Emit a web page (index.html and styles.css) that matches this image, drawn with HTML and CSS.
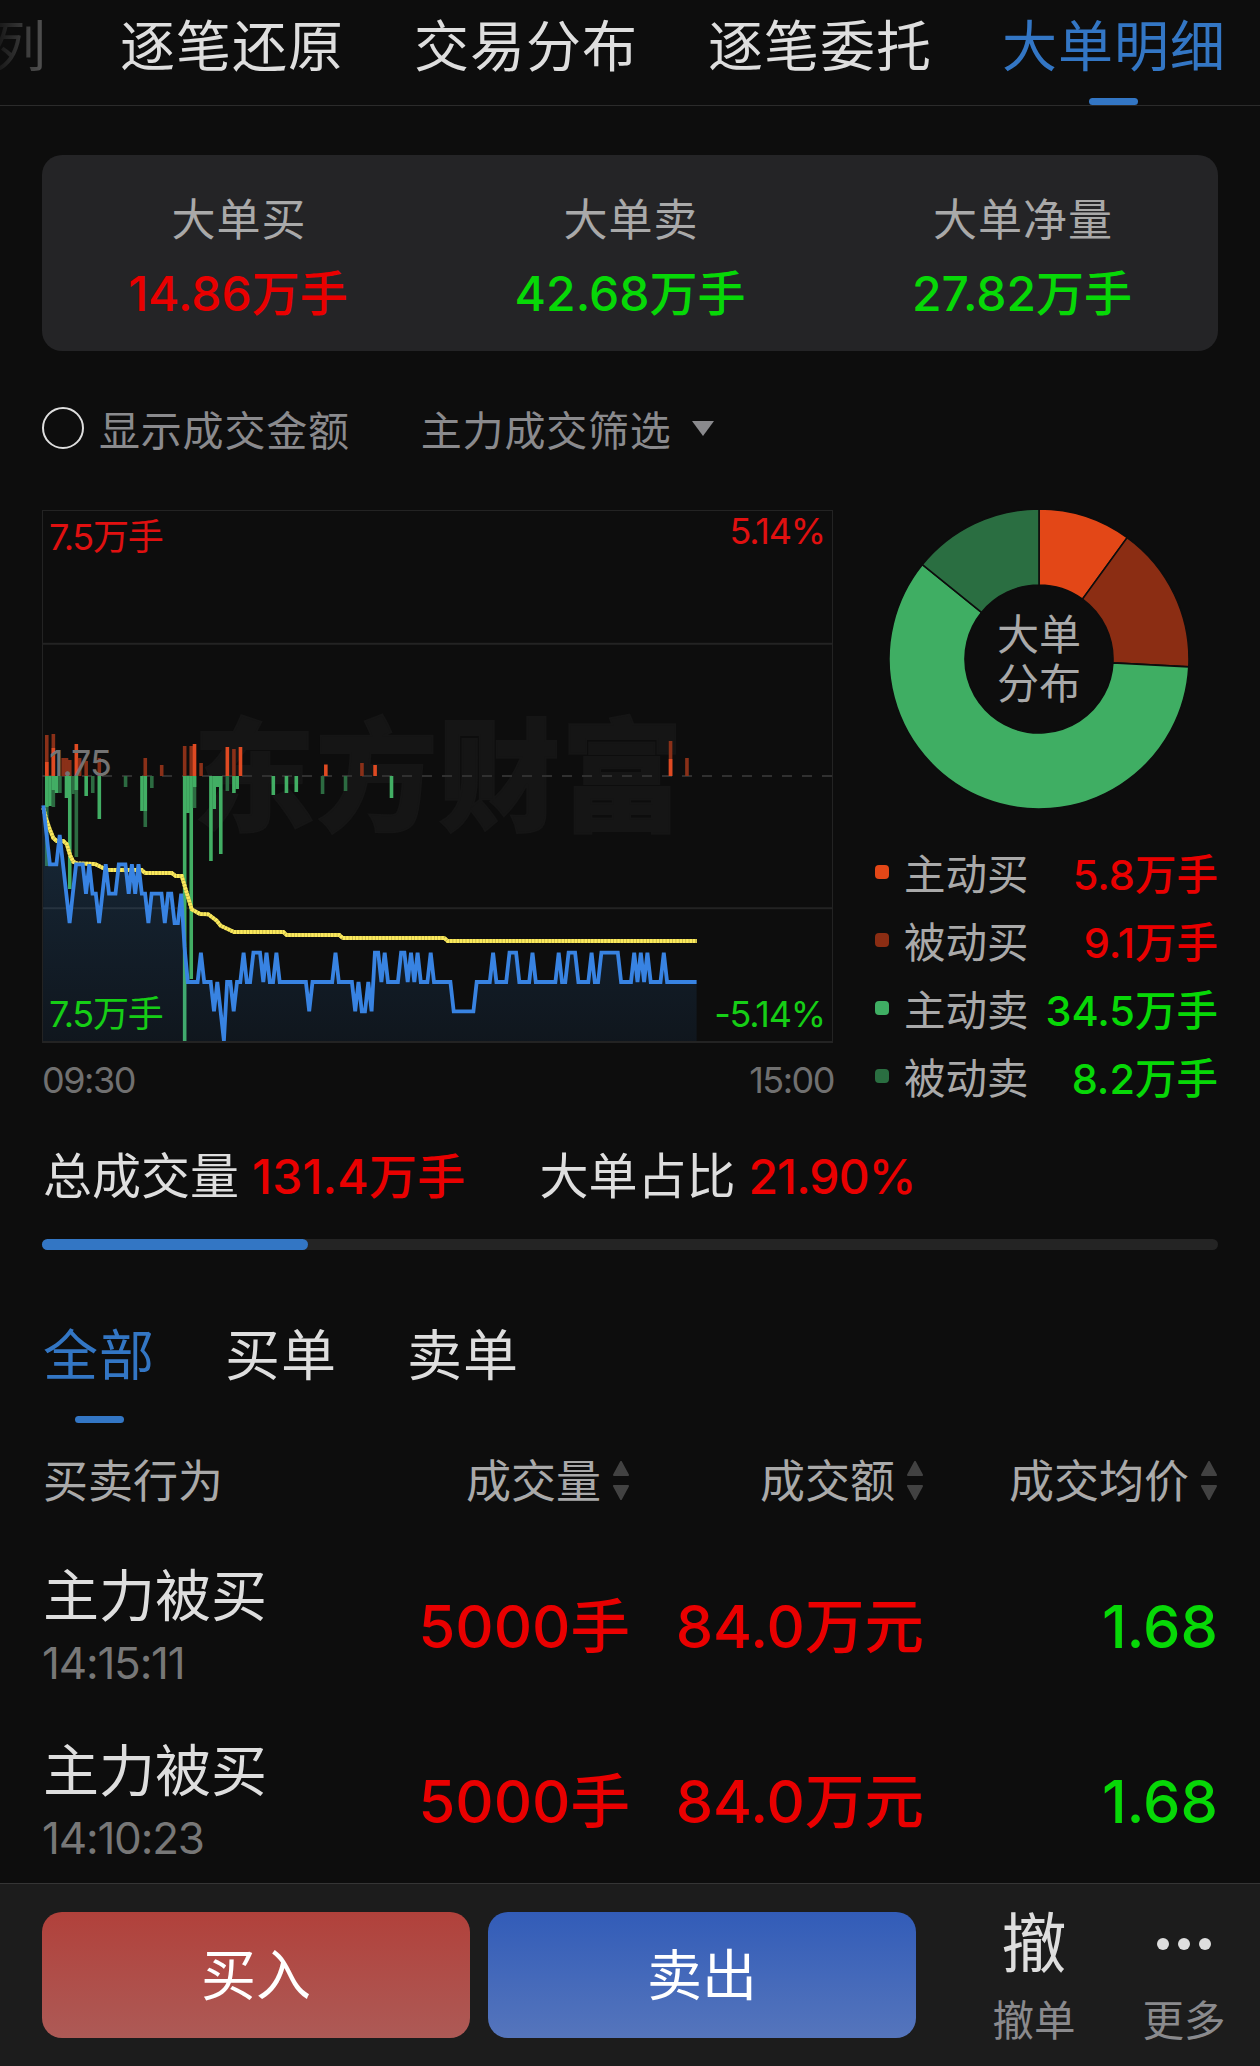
FILE: index.html
```html
<!DOCTYPE html>
<html lang="zh-CN">
<head>
    <meta charset="UTF-8">
    <meta name="viewport" content="width=device-width, initial-scale=1.0">
    <title>大单明细</title>
    <link rel="stylesheet" href="styles.css">
</head>
<body>
    <header class="top-tabs">
        <a class="tab faded">列</a>
        <a class="tab">逐笔还原</a>
        <a class="tab">交易分布</a>
        <a class="tab">逐笔委托</a>
        <a class="tab active">大单明细</a>
    </header>

    <main>
        <section class="summary">
            <div class="summary-item">
                <div class="summary-label">大单买</div>
                <div class="summary-value red">14.86万手</div>
            </div>
            <div class="summary-item">
                <div class="summary-label">大单卖</div>
                <div class="summary-value green">42.68万手</div>
            </div>
            <div class="summary-item">
                <div class="summary-label">大单净量</div>
                <div class="summary-value green">27.82万手</div>
            </div>
        </section>

        <section class="filters">
            <span class="radio"></span>
            <span class="filter-name">显示成交金额</span>
            <span class="filter-name filter-select">主力成交筛选</span>
            <span class="caret"></span>
        </section>

        <section class="charts">
            <div class="trend">
                <svg class="trend-chart" width="792" height="534" viewBox="42 510 792 534">
                    <defs>
                        <linearGradient id="area-fill" gradientUnits="userSpaceOnUse" x1="0" y1="806" x2="0" y2="1042">
                            <stop offset="0" stop-color="#3f8fd6" stop-opacity="0.22"/>
                            <stop offset="1" stop-color="#2f7fd6" stop-opacity="0.08"/>
                        </linearGradient>
                    </defs>
                    <text class="watermark" x="193" y="821" textLength="490">东方财富</text>
                    <rect class="grid" x="42.5" y="510.5" width="790" height="531.5"/>
                    <path class="grid" stroke-width="2" d="M42 643.7H833M42 908.3H833M42 1042H833"/>
                    <path class="grid dashed" d="M42 776H833"/>
                    <g id="bars"></g>
                    <path id="price-area" fill="url(#area-fill)"/>
                    <polyline id="avg-base" class="avg-base"/>
                    <polyline id="avg-line" class="avg-line"/>
                    <polyline id="price-line" class="price-line"/>
                    <text class="axis red-text" x="49" y="550">7.5万手</text>
                    <text class="axis red-text end" x="825" y="543.5">5.14%</text>
                    <text class="axis gray-text" x="49" y="775.5">1.75</text>
                    <text class="axis green-text" x="49" y="1026.5">7.5万手</text>
                    <text class="axis green-text end" x="825" y="1026.5">-5.14%</text>
                </svg>
                <div class="time-axis">
                    <span>09:30</span>
                    <span>15:00</span>
                </div>
            </div>

            <div class="distribution">
                <svg class="donut" width="300" height="300" viewBox="-150 -150 300 300">
                    <g id="donut-slices"></g>
                    <text class="donut-text" x="0" y="-9">大单</text>
                    <text class="donut-text" x="0" y="40">分布</text>
                </svg>
                <ul class="legend">
                    <li><i class="dot active-buy"></i><span>主动买</span><b class="red">5.8万手</b></li>
                    <li><i class="dot passive-buy"></i><span>被动买</span><b class="red">9.1万手</b></li>
                    <li><i class="dot active-sell"></i><span>主动卖</span><b class="green">34.5万手</b></li>
                    <li><i class="dot passive-sell"></i><span>被动卖</span><b class="green">8.2万手</b></li>
                </ul>
            </div>
        </section>

        <section class="totals">
            <span class="total-label">总成交量</span>
            <span class="total-value red">131.4万手</span>
            <span class="total-label">大单占比</span>
            <span class="total-value percent red">21.90%</span>
        </section>
        <div class="progress"><div class="progress-bar" style="width: 22.6%"></div></div>

        <nav class="sub-tabs">
            <a class="tab active">全部</a>
            <a class="tab">买单</a>
            <a class="tab">卖单</a>
        </nav>

        <section class="orders">
            <div class="orders-head">
                <span>买卖行为</span>
                <span>成交量<svg class="sort" width="16" height="40" viewBox="0 0 16 40"><path d="M8 1L15 14H1ZM8 38L1 25H15Z"/></svg></span>
                <span>成交额<svg class="sort" width="16" height="40" viewBox="0 0 16 40"><path d="M8 1L15 14H1ZM8 38L1 25H15Z"/></svg></span>
                <span>成交均价<svg class="sort" width="16" height="40" viewBox="0 0 16 40"><path d="M8 1L15 14H1ZM8 38L1 25H15Z"/></svg></span>
            </div>
            <div class="order">
                <div class="order-type">
                    <div class="order-name">主力被买</div>
                    <div class="order-time">14:15:11</div>
                </div>
                <div class="order-value red">5000手</div>
                <div class="order-value red">84.0万元</div>
                <div class="order-value green">1.68</div>
            </div>
            <div class="order">
                <div class="order-type">
                    <div class="order-name">主力被买</div>
                    <div class="order-time">14:10:23</div>
                </div>
                <div class="order-value red">5000手</div>
                <div class="order-value red">84.0万元</div>
                <div class="order-value green">1.68</div>
            </div>
        </section>
    </main>

    <footer class="bottom-bar">
        <button class="btn buy">买入</button>
        <button class="btn sell">卖出</button>
        <div class="action cancel">
            <span class="action-icon">撤</span>
            <span class="action-label">撤单</span>
        </div>
        <div class="action more">
            <span class="action-icon"><svg width="54" height="12" viewBox="0 0 54 12"><circle cx="6" cy="6" r="6"/><circle cx="27" cy="6" r="6"/><circle cx="48" cy="6" r="6"/></svg></span>
            <span class="action-label">更多</span>
        </div>
    </footer>

    <script src="chart.js"></script>
</body>
</html>
```

FILE: styles.css
```css
/* Basic styling */
* {
    margin: 0;
    padding: 0;
    box-sizing: border-box;
}

body {
    width: 1260px;
    height: 2066px;
    display: flex;
    flex-direction: column;
    overflow: hidden;
    background-color: #0d0d0d;
    color: #dedede;
    font-family: Inter, "Noto Sans CJK SC", sans-serif;
}

main {
    flex: 1;
    min-height: 0;
    padding: 0 42px;
}

.red {
    color: #e90000;
}

.green {
    color: #07d807;
}

/* Tabs */
.top-tabs {
    flex: none;
    height: 106px;
    display: flex;
    justify-content: flex-end;
    gap: 70px;
    padding-right: 34px;
    border-bottom: 1px solid #2b2b2b;
}

.tab {
    flex: none;
    display: flex;
    flex-direction: column;
    align-items: center;
    font-size: 55px;
    letter-spacing: 1px;
    line-height: 93px;
}

.tab.active {
    color: #3376c4;
}

.tab.active::after {
    content: "";
    width: 49px;
    height: 7px;
    margin-top: 5px;
    border-radius: 4px;
    background-color: #3376c4;
}

.tab.faded {
    margin-right: 3px;
    color: transparent;
    background: linear-gradient(to right, #161616 10%, #555);
    background-clip: text;
    -webkit-background-clip: text;
}

/* Summary card */
.summary {
    height: 196px;
    margin-top: 49px;
    padding-top: 35px;
    display: grid;
    grid-template-columns: repeat(3, 1fr);
    text-align: center;
    border-radius: 20px;
    background-color: #242426;
}

.summary-label {
    padding-left: 2px;
    font-size: 44px;
    letter-spacing: 1px;
    line-height: 60px;
    color: #a9a9a9;
}

.summary-value {
    margin-top: 14px;
    font-size: 48px;
    font-weight: 500;
    line-height: 60px;
}

/* Filters */
.filters {
    height: 42px;
    margin-top: 56px;
    display: flex;
    align-items: center;
}

.radio {
    width: 42px;
    height: 42px;
    border: 2px solid #dedede;
    border-radius: 50%;
}

.filter-name {
    margin: 5px 0 0 15px;
    font-size: 41px;
    letter-spacing: 0.8px;
    line-height: 42px;
    color: #8a8a8d;
}

.filter-select {
    margin-left: 71px;
}

.caret {
    margin-left: 20px;
    border: 11px solid transparent;
    border-top: 15px solid #8a8a8d;
    border-bottom: 0;
}

/* Charts */
.charts {
    height: 594px;
    margin-top: 61px;
    display: flex;
    justify-content: space-between;
}

.trend {
    width: 792px;
}

.trend-chart {
    display: block;
    overflow: visible;
}

.time-axis {
    display: flex;
    justify-content: space-between;
    padding-top: 15px;
    font-size: 36px;
    letter-spacing: -1.5px;
    line-height: 42px;
    color: #707070;
}

.watermark {
    font-size: 122px;
    font-weight: 900;
    fill: #151515;
    stroke: #151515;
    stroke-width: 2;
}

.grid {
    fill: none;
    stroke: #232323;
}

.grid.dashed {
    stroke: #303030;
    stroke-width: 2;
    stroke-dasharray: 10 10;
}

.axis {
    font-size: 36px;
    letter-spacing: -1.2px;
}

.axis.end {
    text-anchor: end;
}

.red-text {
    fill: #e01010;
}

.green-text {
    fill: #16ce16;
}

.gray-text {
    fill: #747474;
}

.bright-up {
    fill: #df4a22;
}

.dark-up {
    fill: #8a3018;
}

.bright-down {
    fill: #42ae64;
}

.dark-down {
    fill: #2c6b41;
}

.price-line,
.avg-line,
.avg-base {
    fill: none;
    stroke-width: 3.8;
}

.price-line {
    stroke: #3883e2;
}

.avg-base {
    stroke: #b9ad45;
}

.avg-line {
    stroke: #fbe95c;
    stroke-dasharray: 2.6 0.68;
}

/* Donut and legend */
.distribution {
    width: 343px;
}

.donut {
    display: block;
    margin: -1px 0 0 14px;
}

.donut-text {
    font-size: 42px;
    text-anchor: middle;
    fill: #a9a9a9;
}

.legend {
    margin-top: 29px;
    list-style: none;
}

.legend li {
    height: 68px;
    display: flex;
    align-items: center;
    font-size: 41.5px;
    color: #a9a9a9;
}

.legend b {
    margin-left: auto;
    font-weight: 500;
}

.dot {
    width: 14px;
    height: 14px;
    margin-right: 15px;
    border-radius: 4px;
}

.active-buy {
    background-color: #e34717;
    fill: #e34717;
}

.passive-buy {
    background-color: #8b2d13;
    fill: #8b2d13;
}

.active-sell {
    background-color: #3fae63;
    fill: #3fae63;
}

.passive-sell {
    background-color: #2a6e41;
    fill: #2a6e41;
}

/* Totals */
.totals {
    display: flex;
    margin-top: 43px;
    padding-left: 1px;
    font-size: 49px;
    line-height: 60px;
}

.total-value {
    margin: 0 74px 0 13px;
    font-size: 48px;
    font-weight: 500;
    letter-spacing: 0.2px;
}

.total-value.percent {
    letter-spacing: -0.9px;
}

.progress {
    height: 11px;
    margin-top: 32px;
    border-radius: 6px;
    background-color: #242424;
}

.progress-bar {
    height: 11px;
    border-radius: 6px;
    background-color: #3376c4;
}

.sub-tabs {
    display: flex;
    gap: 70px;
    margin-top: 59px;
    padding-left: 1px;
}

.sub-tabs .tab.active::after {
    margin-top: 14px;
}

/* Orders */
.orders-head {
    display: grid;
    grid-template-columns: repeat(4, 1fr);
    margin-top: 29px;
    font-size: 45px;
    line-height: 60px;
    color: #a9a9a9;
}

.orders-head span {
    display: flex;
    align-items: center;
    justify-content: flex-end;
    white-space: nowrap;
}

.orders-head span:first-child {
    justify-content: flex-start;
    padding-left: 1px;
}

.sort {
    margin: -2px 1px 0 12px;
    fill: #424242;
    stroke: #424242;
    stroke-width: 2;
    stroke-linejoin: round;
}

.order {
    height: 175px;
    display: grid;
    grid-template-columns: repeat(4, 1fr);
    align-items: center;
}

.orders-head + .order {
    margin-top: 28px;
}

.order-name {
    padding: 1px 0 0 1px;
    font-size: 56px;
    line-height: 70px;
}

.order-time {
    font-size: 44px;
    letter-spacing: -1.2px;
    line-height: 64px;
    color: #777;
}

.order-value {
    margin-top: -3px;
    font-size: 59.5px;
    font-weight: 500;
    line-height: 72px;
    text-align: right;
    white-space: nowrap;
}

/* Bottom bar */
.bottom-bar {
    flex: none;
    height: 183px;
    display: flex;
    padding: 28px 0 0 42px;
    border-top: 1px solid #353535;
    background-color: #1c1c1c;
}

.btn {
    width: 428px;
    height: 126px;
    margin-right: 18px;
    border: 0;
    border-radius: 20px;
    color: #fff;
    font-family: inherit;
    font-size: 55px;
    line-height: 126px;
}

.buy {
    background: linear-gradient(#b1413b, #ad5a56);
}

.sell {
    background: linear-gradient(#325cb8, #5575bc);
}

.action {
    width: 84px;
    display: flex;
    flex-direction: column;
    align-items: center;
}

.cancel {
    margin-left: 58px;
}

.more {
    margin-left: 66px;
}

.action-icon {
    height: 64px;
    display: flex;
    align-items: center;
    font-size: 65px;
    line-height: 64px;
    fill: #dedede;
}

.action-label {
    margin-top: 15px;
    font-size: 41.5px;
    line-height: 60px;
    color: #8a8a8d;
}
```

FILE: chart.js
```js
const SVG_NS = 'http://www.w3.org/2000/svg';
const BASE_Y = 776;

function minuteX(m) {
    return 43.3 + m * 3.283;
}

function add(parent, tag, attrs) {
    const el = document.createElementNS(SVG_NS, tag);
    for (const key in attrs) el.setAttribute(key, attrs[key]);
    parent.appendChild(el);
}

// [minute, dark height, bright height]
const upBars = [
    [1, 41, 14], [3, 42, 28], [6, 18, 0], [7, 18, 0], [8, 16, 0], [10, 0, 32], [11, 18, 0],
    [13, 15, 0], [17, 18, 0], [31, 18, 0], [36, 11, 0], [43, 30, 0], [45, 30, 0], [46, 0, 32],
    [48, 13, 0], [56, 0, 29], [58, 27, 0], [60, 0, 29], [86, 0, 11.5], [97, 13, 0],
    [101, 0, 11], [191, 35, 17], [196, 18, 0]
];
const downBars = [
    [1, 90, 31], [2, 0, 30], [3, 31, 14], [4, 0, 17], [5, 17, 0], [7, 0, 22], [8, 0, 113],
    [9, 18, 0], [10, 81, 14], [13, 0, 20], [15, 17, 0], [17, 0, 43], [25, 11, 0], [30, 0, 35],
    [31, 51, 35], [33, 12, 0], [43, 0, 265], [44, 0, 37], [45, 0, 203], [46, 32, 11],
    [51, 0, 85], [52, 0, 33], [53, 0, 11], [54, 0, 78], [56, 15, 0], [58, 0, 17], [59, 0, 13],
    [70, 0, 19], [74, 0, 17], [77, 0, 16], [85, 18, 0], [92, 15, 0], [106, 0, 22]
];

const bars = document.getElementById('bars');

function drawBars(list, up) {
    const dir = up ? 'up' : 'down';
    list.forEach(([m, dark, bright]) => {
        [['dark-', dark], ['bright-', bright]].forEach(([tone, h]) => {
            if (!h) return;
            add(bars, 'rect', {
                class: tone + dir,
                x: minuteX(m) - 1.6,
                y: up ? BASE_Y - h : BASE_Y,
                width: 3.6,
                height: h
            });
        });
    });
}

drawBars(upBars, true);
drawBars(downBars, false);

// Price in ticks below the previous close: [first minute, ticks]
const prices = [
    [0, 1], [1, 2], [2, 3], [5, 2], [6, 3], [7, 4], [8, 5], [9, 4], [10, 3], [13, 4], [14, 3],
    [15, 4], [17, 5], [18, 4], [19, 3], [20, 4], [23, 3], [26, 4], [27, 3], [28, 4], [29, 3],
    [30, 4], [32, 5], [33, 4], [37, 5], [38, 4], [40, 5], [42, 4], [43, 5.8], [44, 7], [48, 6],
    [49, 7], [52, 8], [53, 7], [54, 8], [55, 9], [56, 7], [58, 8], [59, 7], [61, 6], [62, 7],
    [64, 6], [67, 7], [68, 6], [69, 7], [71, 6], [72, 7], [81, 8], [82, 7], [89, 6], [90, 7],
    [95, 8], [96, 7], [97, 8], [99, 7], [100, 8], [101, 6], [103, 7], [104, 6], [105, 7],
    [109, 6], [111, 7], [112, 6], [113, 7], [114, 6], [115, 7], [118, 6], [119, 7], [125, 8],
    [132, 7], [137, 6], [138, 7], [142, 6], [145, 7], [149, 6], [150, 7], [157, 6], [158, 7],
    [160, 6], [163, 7], [167, 6], [168, 7], [170, 6], [176, 7], [180, 6], [181, 7], [182, 6],
    [183, 7], [184, 6], [185, 7], [189, 6], [190, 7]
];
const LAST_MINUTE = 199;

const points = [];
prices.forEach(([start, ticks], i) => {
    const end = i + 1 < prices.length ? prices[i + 1][0] - 1 : LAST_MINUTE;
    for (let m = start; m <= end; m++) {
        points.push(minuteX(m).toFixed(1) + ',' + (BASE_Y + ticks * 29.43).toFixed(1));
    }
});
document.getElementById('price-line').setAttribute('points', points.join(' '));
document.getElementById('price-area').setAttribute('d',
    'M43,1041L' + points.join('L') + 'V1041Z');

// Average price
const average = '43.3,808 46,818 49.3,828 53.3,838 56.7,841 63.3,841 66.7,844 70,855 73.3,861.7 ' +
    '76.7,863.3 95,864 105,869 109,870 141.7,870 145,873 171.7,873 175.7,876 181.7,876 191.7,909.3 ' +
    '200,914 208.3,914.3 216.7,920.7 220.7,925.7 234,932 283.3,932 286.7,935 339.3,935 342.7,938 ' +
    '444.3,938 447.7,941 696.7,941';
document.getElementById('avg-base').setAttribute('points', average);
document.getElementById('avg-line').setAttribute('points', average);

// Donut, angles in degrees clockwise from the top
const slices = [
    ['active-buy', 0, 36],
    ['passive-buy', 36, 93],
    ['active-sell', 93, 309],
    ['passive-sell', 309, 360]
];

function polar(r, deg) {
    const a = (deg - 90) * Math.PI / 180;
    return (r * Math.cos(a)).toFixed(2) + ' ' + (r * Math.sin(a)).toFixed(2);
}

const donut = document.getElementById('donut-slices');
slices.forEach(([name, from, to]) => {
    const large = to - from > 180 ? 1 : 0;
    add(donut, 'path', {
        class: name,
        stroke: '#0d0d0d',
        'stroke-width': 1.6,
        d: `M${polar(150, from)}A150 150 0 ${large} 1 ${polar(150, to)}` +
            `L${polar(74, to)}A74 74 0 ${large} 0 ${polar(74, from)}Z`
    });
});
```
